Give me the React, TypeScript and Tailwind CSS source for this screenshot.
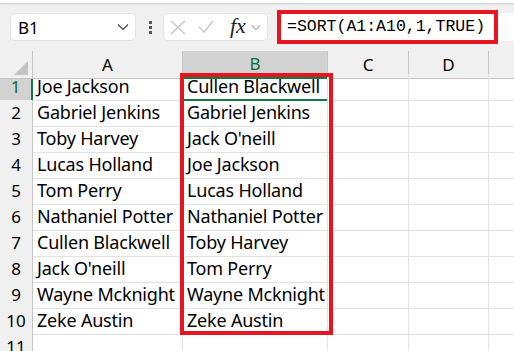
import React from 'react';

const colA = ['Joe Jackson', 'Gabriel Jenkins', 'Toby Harvey', 'Lucas Holland', 'Tom Perry', 'Nathaniel Potter', 'Cullen Blackwell', "Jack O'neill", 'Wayne Mcknight', 'Zeke Austin'];
const colB = ['Cullen Blackwell', 'Gabriel Jenkins', "Jack O'neill", 'Joe Jackson', 'Lucas Holland', 'Nathaniel Potter', 'Toby Harvey', 'Tom Perry', 'Wayne Mcknight', 'Zeke Austin'];

const cols = 'grid grid-cols-[33px_150px_145px_81px_80px_1fr]';

const App = () => {
    return (
        <div className="w-[514px] h-[351px] overflow-hidden bg-[#f0f0f0] relative" style={{ fontFamily: '"Noto Sans", sans-serif' }}>
            {/* bordo della barra multifunzione */}
            <div className="h-[3px] bg-white shadow-[0_1px_2px_rgba(0,0,0,0.15)]" />

            {/* barra della formula */}
            <div className="flex items-center h-[48px] pl-[10px]">
                <div className="flex items-center justify-between w-[126px] h-[28px] bg-white rounded-[5px] border border-[#e3e3e3] pl-[7px] pr-[6px]">
                    <span className="text-[17px] text-black leading-none">B1</span>
                    <svg width="12" height="8" viewBox="0 0 12 8"><path d="M1 1.5l5 5 5-5" stroke="#444" strokeWidth="1.2" fill="none" /></svg>
                </div>
                <div className="flex flex-col gap-[2px] ml-[13px] mr-[11px]">
                    <span className="w-[3px] h-[3px] bg-[#555]" />
                    <span className="w-[3px] h-[3px] bg-[#555]" />
                    <span className="w-[3px] h-[3px] bg-[#555]" />
                </div>
                <div className="flex items-center w-[105px] h-[28px] bg-white rounded-[5px] border border-[#e3e3e3] pl-[6px]">
                    <svg width="16" height="15" viewBox="0 0 16 15"><path d="M1 1l14 13M15 1L1 14" stroke="#c4c4c4" strokeWidth="1.3" /></svg>
                    <svg width="16" height="14" viewBox="0 0 16 14" className="ml-[12px]"><path d="M1 7l5 5L15 1" stroke="#c4c4c4" strokeWidth="1.3" fill="none" /></svg>
                    <span className="ml-[16px] text-[22px] italic text-[#222] leading-none -mt-[2px]" style={{ fontFamily: '"Liberation Serif", serif' }}>fx</span>
                    <svg width="10" height="7" viewBox="0 0 10 7" className="ml-[5px]"><path d="M1 1.5l4 4 4-4" stroke="#aaa" strokeWidth="1.1" fill="none" /></svg>
                </div>
                <div className="ml-[9px] w-[221px] h-[34px] border-[4px] border-[#e8141f] bg-white flex items-center pl-[6px]">
                    <span className="text-[16.5px] text-black leading-none" style={{ fontFamily: '"Liberation Mono", monospace' }}>=SORT(A1:A10,1,TRUE)</span>
                </div>
                <div className="flex-1 h-[28px] bg-white" />
            </div>

            {/* intestazioni colonne */}
            <div className={`${cols} h-[23px] text-[17px] text-black`}>
                <div className="bg-[#f0f0f0] border-r border-b border-[#c6c6c6] relative">
                    <svg width="16" height="16" viewBox="0 0 16 16" className="absolute right-[3px] bottom-[2px]"><path d="M15 1V15H1Z" fill="#c4c4c4" /></svg>
                </div>
                <div className="bg-[#f0f0f0] border-r border-b border-[#c6c6c6] flex items-center justify-center">A</div>
                <div className="bg-[#d2d2d2] border-r border-b-2 border-b-[#107c41] border-r-[#c6c6c6] flex items-center justify-center text-[#0e6b38]">B</div>
                <div className="bg-[#f0f0f0] border-r border-b border-[#c6c6c6] flex items-center justify-center">C</div>
                <div className="bg-[#f0f0f0] border-r border-b border-[#c6c6c6] flex items-center justify-center">D</div>
                <div className="bg-[#f0f0f0] border-b border-[#c6c6c6]" />
            </div>

            {/* righe */}
            {Array.from({ length: 11 }).map((_, i) => (
                <div key={i} className={`${cols} h-[26px] text-[18px] text-black bg-white`}>
                    <div className={`flex items-center justify-center text-[17px] border-b border-r ${i === 0 ? 'bg-[#d2d2d2] text-[#0e6b38] border-r-2 border-r-[#107c41] border-b-[#c6c6c6]' : 'bg-[#f0f0f0] border-[#c6c6c6]'}`}>{i + 1}</div>
                    <div className="flex items-center pl-[4px] border-b border-r border-[#e1e1e1] whitespace-nowrap overflow-hidden tracking-[-0.2px]">{colA[i] ?? ''}</div>
                    <div className={`flex items-center pl-[4px] border-b border-r border-[#e1e1e1] whitespace-nowrap overflow-hidden tracking-[-0.2px] ${i === 0 ? 'border-b-2 border-b-[#107c41]' : ''}`}>{colB[i] ?? ''}</div>
                    <div className="border-b border-r border-[#e1e1e1]" />
                    <div className="border-b border-r border-[#e1e1e1]" />
                    <div className="border-b border-[#e1e1e1]" />
                </div>
            ))}

            {/* riquadro rosso sulla colonna B */}
            <div className="absolute left-[180px] top-[73px] w-[153px] h-[262px] border-[4px] border-[#e8141f] pointer-events-none" />
        </div>
    );
};

export default App;
